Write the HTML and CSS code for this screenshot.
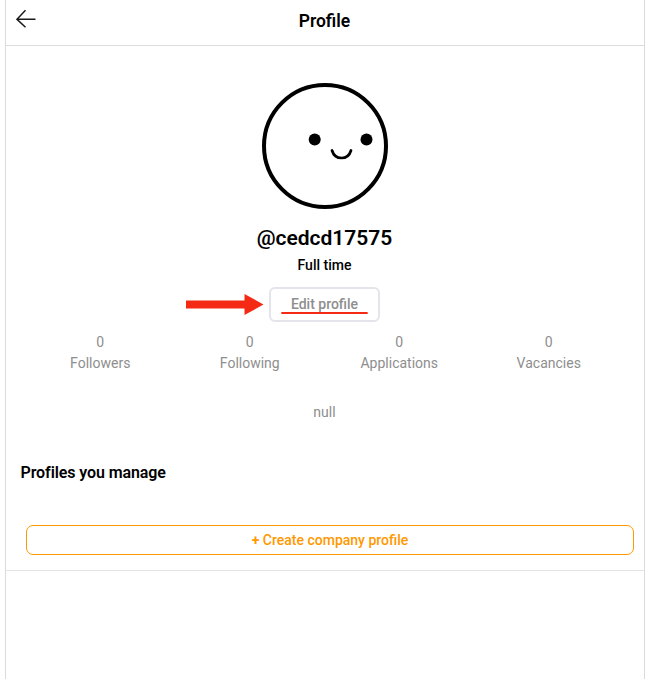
FILE: index.html
```html
<!DOCTYPE html>
<html lang="en"><head><meta charset="utf-8"><title>Profile</title><link rel="stylesheet" href="styles.css"></head>
<body>
<main class="page">
<header class="topbar">
<svg class="back" width="20" height="20" viewBox="0 0 20 20"><path d="M19.500 10.300H1M9.500 1.300L1 10.300l8.500 8"/></svg>
<h1>Profile</h1>
</header>
<section class="profile">
<svg class="avatar" width="126" height="126" viewBox="0 0 126 126"><circle class="line" cx="63" cy="63" r="61"/><circle cx="52.700" cy="56.500" r="6"/><circle cx="104.500" cy="56.500" r="6"/><path class="smile" d="M70 67.500C73 77.500 86 77.500 89 67.500"/></svg>
<h2>@cedcd17575</h2>
<p class="job">Full time</p>
<div class="edit-wrap">
<button class="edit">Edit profile</button>
<svg class="pointer" width="78" height="24" viewBox="0 0 78 24"><path d="M0 7.500H58.500V1L77.500 11.500 58.500 22V15.500H0z"/></svg>
<svg class="underline" width="88" height="4" viewBox="0 0 88 4"><path d="M1 2H86"/></svg>
</div>
<div class="stats">
<div><span>0</span><span>Followers</span></div><div><span>0</span><span>Following</span></div><div><span>0</span><span>Applications</span></div><div><span>0</span><span>Vacancies</span></div>
</div>
<p class="bio">null</p>
</section>
<section class="manage">
<h3>Profiles you manage</h3>
<button class="create"><b>+</b> Create company profile</button>
</section>
</main>
</body></html>
```
FILE: styles.css
```css
* { box-sizing: border-box; }
body { margin: 0; background: #fff; font-family: Roboto, sans-serif; color: #000; }
h1, h2, h3, p { margin: 0; }
.page { width: 640px; height: 679px; margin-left: 5px; border: solid #dbdbdb; border-width: 0 1px; }
.topbar { height: 46px; border-bottom: 1px solid #dbdbdb; display: grid; grid-template-columns: 40px 1fr 41px; padding-top: 9px; }
.back { margin-left: 10px; fill: none; stroke: #1a1a1a; stroke-width: 1.5; }
h1 { font-size: 17.5px; font-weight: 600; line-height: 24px; text-align: center; }
.profile { display: flex; flex-direction: column; align-items: center; padding: 37px 1px 0 0; }
.avatar { margin-left: 1px; }
.avatar .line, .smile { fill: none; stroke: #000; stroke-width: 4; }
.avatar .smile { stroke-width: 2.7; stroke-linecap: round; }
h2 { font-size: 21px; font-weight: 600; line-height: 26px; margin-top: 16px; }
.job { font-size: 14px; font-weight: 500; line-height: 20px; margin-top: 4px; }
.edit-wrap { position: relative; margin-top: 12px; height: 35px; }
button { font-family: inherit; background: #fff; padding: 0; }
.edit { display: block; width: 111px; height: 35px; border: 2px solid #e4e4ea; border-radius: 6px; color: #8e8e8e; font-size: 14px; font-weight: 500; padding-bottom: 2px; }
.pointer { position: absolute; left: -83px; top: 6px; fill: #f42a15; }
.underline { position: absolute; left: 12px; top: 24px; fill: none; stroke: #f42a15; stroke-width: 1.8; stroke-linecap: round; }
.stats { width: 598px; display: grid; grid-template-columns: repeat(4, 1fr); margin-top: 10px; }
.stats div { display: flex; flex-direction: column; align-items: center; }
.stats span, .bio { color: #8e8e8e; font-size: 14px; line-height: 21px; }
.bio { margin-top: 28px; }
.manage { margin-top: 40px; height: 108px; border-bottom: 1px solid #e4e4e4; }
h3 { font-size: 16px; font-weight: 600; line-height: 20px; margin-left: 14.5px; letter-spacing: -0.1px; }
.create { display: block; width: 608px; height: 30px; margin: 42px 0 0 20px; border: 1px solid #ff9800; border-radius: 7px; color: #ff9800; font-size: 14px; font-weight: 500; }
.create b { font-weight: 700; }
```
